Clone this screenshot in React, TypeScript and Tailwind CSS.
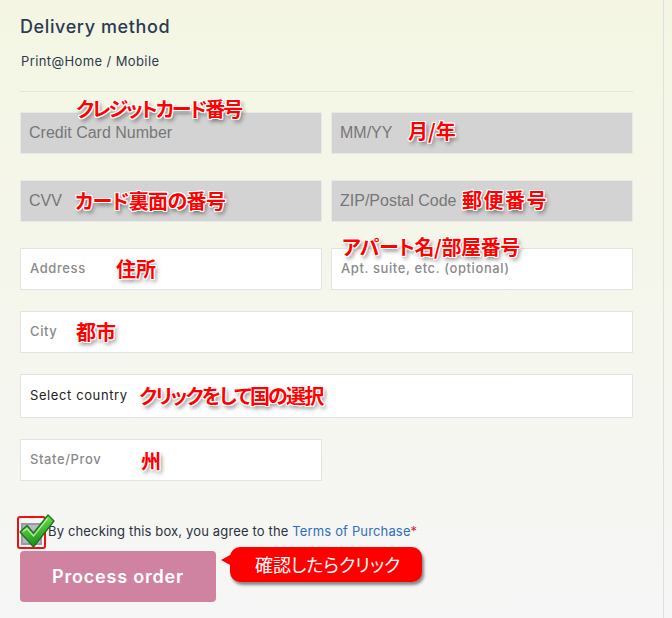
import React from "react";

const geo = "font-['Inter','Lato',sans-serif] tracking-[0.6px]";
const ann =
  "absolute whitespace-nowrap font-['Noto_Sans_CJK_JP',sans-serif] font-bold text-[20px] leading-[24px] text-[#ff0000] [font-feature-settings:'palt'] [text-shadow:1px_1px_0_#fff,-1px_-1px_0_#fff,1px_-1px_0_#fff,-1px_1px_0_#fff,0_1px_0_#fff,0_-1px_0_#fff,1px_0_0_#fff,-1px_0_0_#fff,2px_3px_4px_rgba(0,0,0,0.55)]";

function GrayField({ text }: { text: string }) {
  return (
    <div className="h-[42px] bg-[#d3d3d3] border border-[#e9e9e9] flex items-center pl-[8px] font-['Liberation_Sans',sans-serif] text-[16px] text-[#777]">
      {text}
    </div>
  );
}

function WhiteField({ text, dark, tall }: { text: string; dark?: boolean; tall?: boolean }) {
  return (
    <div
      className={`${tall ? "h-[44px]" : "h-[42px]"} bg-white border border-[#e3e3e3] flex items-center pl-[9px] ${geo} text-[13px] ${
        dark ? "text-[#222]" : "text-[#8a8a8a] font-medium"
      }`}
    >
      {text}
    </div>
  );
}

function Check() {
  return (
    <svg width="38" height="36" viewBox="0 0 38 36" className="absolute -left-[1px] -top-[5px]">
      <defs>
        <linearGradient id="g" x1="0" y1="0" x2="0.3" y2="1">
          <stop offset="0" stopColor="#b2f59a" />
          <stop offset="0.45" stopColor="#4fcb3a" />
          <stop offset="1" stopColor="#1b8c1b" />
        </linearGradient>
      </defs>
      <path
        d="M2 19 L9 12.5 L15.5 20 L30 2 L36 8 L15.5 34 Z"
        fill="url(#g)"
        stroke="#236f20"
        strokeWidth="1.3"
        strokeLinejoin="round"
      />
      <path d="M5 18.5 L9 15.5 L15.5 23 L29.5 5.5" fill="none" stroke="#eaffdd" strokeWidth="1.2" opacity="0.75" />
    </svg>
  );
}

export default function App() {
  return (
    <div className="relative w-[672px] h-[618px] overflow-hidden bg-gradient-to-b from-[#f4f6e3] to-[#f6f6f6]">
      <div className="absolute left-[663px] top-0 h-full w-px bg-[#e0e0e0]" />
      <div className="w-[613px] ml-[20px] flex flex-col">
        <div className={`pt-[16px] ${geo} text-[18px] leading-[22px] font-medium text-[#2c3a52]`}>Delivery method</div>
        <div className={`mt-[15px] font-['Inter','Lato',sans-serif] tracking-[0.4px] text-[13px] leading-[16px] text-[#2d3a4c] pl-[1px]`}>Print@Home / Mobile</div>
        <div className="mt-[22px] h-px bg-[#e4e5dc]" />

        <div className="mt-[20px] grid grid-cols-2 gap-x-[9px]">
          <div className="relative">
            <GrayField text="Credit Card Number" />
            <div className={`${ann} left-[56px] -top-[15px] tracking-[-2px]`}>クレジットカード番号</div>
          </div>
          <div className="relative">
            <GrayField text="MM/YY" />
            <div className={`${ann} left-[77px] top-[7px]`}>月/年</div>
          </div>
        </div>

        <div className="mt-[26px] grid grid-cols-2 gap-x-[9px]">
          <div className="relative">
            <GrayField text="CVV" />
            <div className={`${ann} left-[55px] top-[9px] tracking-[-0.6px]`}>カード裏面の番号</div>
          </div>
          <div className="relative">
            <GrayField text="ZIP/Postal Code" />
            <div className={`${ann} left-[131px] top-[8px] tracking-[1.5px]`}>郵便番号</div>
          </div>
        </div>

        <div className="mt-[26px] grid grid-cols-2 gap-x-[9px]">
          <div className="relative">
            <WhiteField text="Address" />
            <div className={`${ann} left-[96px] top-[9px]`}>住所</div>
          </div>
          <div className="relative">
            <WhiteField text="Apt. suite, etc. (optional)" />
            <div className={`${ann} left-[11px] -top-[13px] tracking-[-0.4px]`}>アパート名/部屋番号</div>
          </div>
        </div>

        <div className="mt-[21px] relative">
          <WhiteField text="City" />
          <div className={`${ann} left-[56px] top-[9px]`}>都市</div>
        </div>

        <div className="mt-[21px] relative">
          <WhiteField text="Select country" dark tall />
          <div className={`${ann} left-[119px] top-[10px] tracking-[-1.8px]`}>クリックをして国の選択</div>
        </div>

        <div className="mt-[21px] w-[302px] relative">
          <WhiteField text="State/Prov" />
          <div className={`${ann} left-[121px] top-[10px]`}>州</div>
        </div>

        <div className="mt-[35px] -ml-[3px] flex items-center gap-[2px]">
          <div className="relative w-[29px] h-[33px] shrink-0 rounded-[3px] border-2 border-[#ee1111] flex items-center justify-center">
            <div className="w-[21px] h-[22px] mt-[3px] bg-[#b9b9c2] border-2 border-[#9a9aa6]" />
            <Check />
          </div>
          <div className="font-['Inter','Lato',sans-serif] tracking-[0.15px] text-[13px] leading-[18px] text-[#2a3140] -mt-[3px]">
            By checking this box, you agree to the <span className="text-[#2d6fc0]">Terms of Purchase</span>
            <span className="text-[#e0203a]">*</span>
          </div>
        </div>

        <div className="mt-[2px] flex items-start">
          <div className={`w-[196px] h-[51px] rounded-[4px] bg-[#d083a1] flex items-center justify-center ${geo} tracking-[0.8px] text-[18px] font-semibold text-white`}>
            Process order
          </div>
          <div className="relative ml-[14px] -mt-[4px] w-[192px] h-[35px] rounded-[10px] bg-[#ff0000] shadow-[2px_3px_3px_rgba(0,0,0,0.45)] flex items-center pl-[25px] font-['Noto_Sans_CJK_JP',sans-serif] text-[18px] text-white [font-feature-settings:'palt']">
            <svg className="absolute -left-[11px] top-[6px]" width="14" height="14" viewBox="0 0 14 14">
              <path d="M2 7 L13 1 L13 13 Z" fill="#ff0000" />
            </svg>
            確認したらクリック
          </div>
        </div>
      </div>
    </div>
  );
}
